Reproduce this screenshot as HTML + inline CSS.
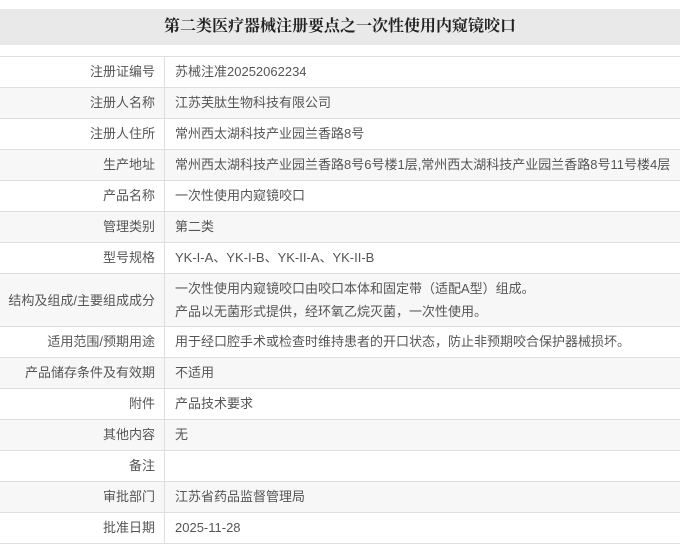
<!DOCTYPE html>
<html><head><meta charset="utf-8"><style>
body{margin:0;width:680px;height:543px;overflow:hidden;background:#fff;font-family:"Liberation Sans","Noto Sans CJK SC",sans-serif;color:#555;font-size:13px}
.h{position:absolute;top:9px;left:0;width:680px;height:36px;background:#e9e9e9;text-align:center;line-height:36px;font-family:"Liberation Serif","Noto Serif CJK SC",serif;font-weight:bold;font-size:16px;color:#222}
table{position:absolute;top:56px;left:0;width:680px;border-collapse:collapse}
td{border-top:1px solid #dedede;border-bottom:1px solid #dedede;height:30px;padding:0;line-height:20px}
td.l{width:155px;padding-right:9px;text-align:right;border-right:1px solid #dedede}
td.v{padding-left:10px;white-space:nowrap}
tr:nth-child(even) td{background:#f7f7f7}
tr.t td{height:52px;line-height:23px}
</style></head><body>
<div class="h">第二类医疗器械注册要点之一次性使用内窥镜咬口</div>
<table>
<tr><td class="l">注册证编号</td><td class="v">苏械注准20252062234</td></tr>
<tr><td class="l">注册人名称</td><td class="v">江苏芙肽生物科技有限公司</td></tr>
<tr><td class="l">注册人住所</td><td class="v">常州西太湖科技产业园兰香路8号</td></tr>
<tr><td class="l">生产地址</td><td class="v">常州西太湖科技产业园兰香路8号6号楼1层,常州西太湖科技产业园兰香路8号11号楼4层</td></tr>
<tr><td class="l">产品名称</td><td class="v">一次性使用内窥镜咬口</td></tr>
<tr><td class="l">管理类别</td><td class="v">第二类</td></tr>
<tr><td class="l">型号规格</td><td class="v">YK-I-A、YK-I-B、YK-II-A、YK-II-B</td></tr>
<tr class="t"><td class="l">结构及组成/主要组成成分</td><td class="v">一次性使用内窥镜咬口由咬口本体和固定带（适配A型）组成。<br>产品以无菌形式提供，经环氧乙烷灭菌，一次性使用。</td></tr>
<tr><td class="l">适用范围/预期用途</td><td class="v">用于经口腔手术或检查时维持患者的开口状态，防止非预期咬合保护器械损坏。</td></tr>
<tr><td class="l">产品储存条件及有效期</td><td class="v">不适用</td></tr>
<tr><td class="l">附件</td><td class="v">产品技术要求</td></tr>
<tr><td class="l">其他内容</td><td class="v">无</td></tr>
<tr><td class="l">备注</td><td class="v"></td></tr>
<tr><td class="l">审批部门</td><td class="v">江苏省药品监督管理局</td></tr>
<tr><td class="l">批准日期</td><td class="v">2025-11-28</td></tr>
</table>
</body></html>
